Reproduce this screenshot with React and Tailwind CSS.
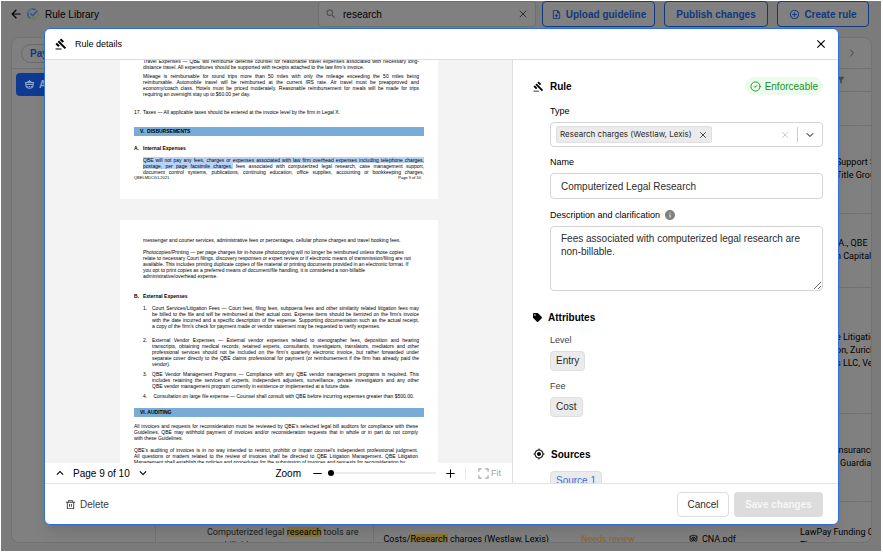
import { useState } from 'react'
import {
  MdAddCircleOutline,
  MdArrowBack,
  MdClose,
  MdFilterAlt,
  MdGavel,
  MdInfo,
  MdKeyboardArrowDown,
  MdKeyboardArrowUp,
  MdMyLocation,
  MdOutlineUploadFile,
  MdSearch,
} from 'react-icons/md'
import { FaTag } from 'react-icons/fa'
import { RiDeleteBinLine } from 'react-icons/ri'
import { LuChevronDown, LuChevronRight, LuCircleCheck, LuMinus, LuPlus, LuX } from 'react-icons/lu'

const clientRows = [
  { height: 'h-[88px]', lines: ['Support S', 'Title Grou'] },
  { height: 'h-[74px]', lines: ['.A., QBE', 'n Capital'] },
  { height: 'h-[126px]', lines: ['e Litigatio', 'on, Zurich', 's LLC, Ver'] },
  { height: 'h-[88px]', lines: ['Insurance', ', Guardia'] },
]

function Logo() {
  return (
    <svg width="12" height="12" viewBox="0 0 24 24" fill="none" strokeWidth="3">
      <path d="M17 3.5A10 10 0 1 0 21.5 10" stroke="#27599b" />
      <path d="M21.5 10a10 10 0 0 1-15 10.5" stroke="#8a8040" />
      <path d="M2.5 9a10 10 0 0 1 7-7" stroke="#5d7f6a" />
      <path d="M7 11l4.5 4.5L21 5" stroke="#27599b" />
    </svg>
  )
}

function BotIcon() {
  return (
    <svg width="11" height="11" viewBox="0 0 24 24" fill="none" stroke="currentColor" strokeWidth="2.4">
      <path d="M12 2v5M8 7c0-3 8-3 8 0M2 8h20M4 8v4h16V8M4 12c0 11 16 11 16 0" />
      <path d="M8 15v3M12 15v3M16 15v3" />
    </svg>
  )
}

function ShieldIcon() {
  return (
    <svg width="9" height="10" viewBox="0 0 24 24" fill="none" stroke="currentColor" strokeWidth="2.4">
      <path d="M3 4c6 0 6-2 9-2s3 2 9 2v9c0 5-4 8-9 10-5-2-9-5-9-10z" />
      <circle cx="12" cy="12" r="5" />
      <path d="M10 12h4M12 10v4" />
    </svg>
  )
}

function FitIcon() {
  return (
    <svg width="11" height="11" viewBox="0 0 24 24" fill="none" stroke="currentColor" strokeWidth="2.4">
      <path d="M2 8V2h6M16 2h6v6M22 16v6h-6M8 22H2v-6" />
    </svg>
  )
}

function Library() {
  return (
    <div className="flex h-full flex-col bg-[#7b7b7b] text-black">
      <header className="flex items-center pr-3 pl-2">
        <button aria-label="Back">
          <MdArrowBack size={14} />
        </button>
        <div className="ml-1 flex items-center gap-1.5">
          <Logo />
          <h1>Rule Library</h1>
        </div>
        <div className="ml-auto flex items-center">
          <label className="flex h-[26px] w-[218px] items-center rounded border border-[#6f6f6f] bg-[#808080] px-1.5">
            <MdSearch size={12} className="text-[#4c4c4c]" />
            <input
              aria-label="Search rules"
              defaultValue="research"
              className="ml-1.5 min-w-0 flex-1 outline-none"
            />
            <LuX size={12} className="text-[#2f2f2f]" />
          </label>
          <div className="ml-1.5 flex gap-[9px] font-bold text-[#12387e]">
            <button className="flex h-[26px] w-[113px] items-center justify-center gap-1 rounded border border-[#12387e] bg-[#808080]">
              <MdOutlineUploadFile size={11} />
              Upload guideline
            </button>
            <button className="h-[26px] w-[104px] rounded border border-[#12387e] bg-[#808080]">
              Publish changes
            </button>
            <button className="flex h-[26px] w-[92px] items-center justify-center gap-1 rounded border border-[#12387e] bg-[#808080]">
              <MdAddCircleOutline size={11} />
              Create rule
            </button>
          </div>
        </div>
      </header>

      <main className="mt-[10px] mr-[9px] mb-[8px] ml-[10px] flex min-h-0 flex-1 flex-col overflow-hidden rounded-lg border border-[#727272] bg-[#808080]">
        <nav className="flex h-[31px] shrink-0 items-center justify-between border-b border-[#727272] px-[9px]">
          <button className="h-[19px] rounded-full border border-[#6b6b6b] px-2 font-bold text-[#12387e]">
            Payments
          </button>
          <LuChevronRight size={12} className="mr-1 text-[#444444]" />
        </nav>
        <div className="flex min-h-0 flex-1">
          <aside className="w-[144px] shrink-0 border-r border-[#727272] p-1">
            <button className="flex h-[23px] w-full items-center gap-1 rounded bg-[#0d3b94] px-2 font-bold text-[#8fa3c8]">
              <BotIcon />
              All
            </button>
          </aside>
          <div className="min-w-0 flex-1 overflow-hidden">
            <table className="w-full table-fixed border-collapse text-left font-['Roboto'] text-[9px] leading-[13px]">
              <colgroup>
                <col className="w-[217px]" />
                <col className="w-[198px]" />
                <col className="w-[109px]" />
                <col className="w-[110px]" />
                <col />
              </colgroup>
              <thead>
                <tr className="h-[22px] border-b border-[#727272]">
                  <th colSpan={4} />
                  <th className="pl-[46px]">
                    <MdFilterAlt size={10} className="text-[#4c4c4c]" />
                  </th>
                </tr>
              </thead>
              <tbody>
                <tr className="h-[34px] border-b border-[#727272]">
                  <td colSpan={5} />
                </tr>
                {clientRows.map((row) => (
                  <tr key={row.lines[0]} className={`${row.height} border-b border-[#727272]`}>
                    <td colSpan={4} />
                    <td className="overflow-hidden pl-[46px] whitespace-nowrap">
                      {row.lines.map((line) => (
                        <div key={line}>{line}</div>
                      ))}
                    </td>
                  </tr>
                ))}
                <tr className="h-[76px] whitespace-nowrap">
                  <td className="border-r border-[#727272] pl-[51px] text-[#1c1c1c]">
                    Computerized legal <mark className="bg-[#8d7536] text-black">research</mark> tools are
                    <br />
                    non-billable.
                  </td>
                  <td className="pl-[10px]">
                    Costs/<mark className="bg-[#8d7536] text-black">Research</mark> charges (Westlaw, Lexis)
                  </td>
                  <td className="pl-[10px] text-[#91661a]">Needs review</td>
                  <td className="pl-[9px]">
                    <span className="flex items-center gap-1">
                      <ShieldIcon />
                      CNA.pdf
                    </span>
                  </td>
                  <td className="overflow-hidden pl-[10px]">
                    LawPay Funding C
                    <br />
                    Thomson
                  </td>
                </tr>
              </tbody>
            </table>
          </div>
        </div>
      </main>
    </div>
  )
}

// one printed line of the document, spread to the column edge when justified
function Lines({ text, justify = false }) {
  return text.map((line, i) => (
    <p
      key={line}
      className={
        justify && i < text.length - 1
          ? 'whitespace-nowrap text-justify [text-align-last:justify]'
          : 'whitespace-nowrap'
      }
    >
      {line}
    </p>
  ))
}

function Item({ mark, children }) {
  return (
    <div className="flex">
      <span className="w-[9px] shrink-0">{mark}</span>
      <div className="min-w-0 flex-1">{children}</div>
    </div>
  )
}

function Band({ children }) {
  return <h3 className="h-[9px] bg-[#78abd6] pl-1.5 leading-[9px] font-bold">{children}</h3>
}

function DocumentPages() {
  return (
    <div className="-mt-8 flex flex-col gap-[21px] pl-[75px] text-[5px] leading-[6px] text-black">
      <article className="h-[171px] w-[318px] bg-white px-[14px] pt-[30px]">
        <div className="flex flex-col pr-[5px] pl-[9px]">
          <Lines
            justify
            text={[
              'Travel Expenses — QBE will reimburse defense counsel for reasonable travel expenses associated with necessary long-',
              'distance travel. All expenditures should be supported with receipts attached to the law firm’s invoice.',
            ]}
          />
          <div className="mt-[3px]">
            <Lines
              justify
              text={[
                'Mileage is reimbursable for round trips more than 50 miles with only the mileage exceeding the 50 miles being',
                'reimbursable. Automobile travel will be reimbursed at the current IRS rate. Air travel must be preapproved and',
                'economy/coach class. Hotels must be priced moderately. Reasonable reimbursement for meals will be made for trips',
                'requiring an overnight stay up to $60.00 per day.',
              ]}
            />
          </div>
        </div>
        <div className="mt-[12px]">
          <Item mark="17.">
            <p>Taxes — All applicable taxes should be entered at the invoice level by the firm in Legal X.</p>
          </Item>
        </div>
        <div className="mt-[12px]">
          <Band>V. &nbsp;DISBURSEMENTS</Band>
        </div>
        <div className="mt-[9px] font-bold">
          <Item mark="A.">Internal Expenses</Item>
        </div>
        <div className="mt-[6px] pl-[9px]">
          <p className="text-justify whitespace-nowrap [text-align-last:justify]">
            <mark className="bg-[#b9d3f8] text-inherit">
              QBE will not pay any fees, charges or expenses associated with law firm overhead expenses including telephone charges,
            </mark>
          </p>
          <p className="text-justify whitespace-nowrap [text-align-last:justify]">
            <mark className="bg-[#b9d3f8] text-inherit">postage, per page facsimile charges,</mark> fees associated with
            computerized legal research, case management support,
          </p>
          <p className="text-justify whitespace-nowrap [text-align-last:justify]">
            document control systems, publications, continuing education, office supplies, accounting or bookkeeping charges,
          </p>
        </div>
        <div className="flex justify-between pr-[3px] text-[4px]">
          <span>QBELMDCG1.2021</span>
          <span>Page 9 of 10</span>
        </div>
      </article>

      <article className="w-[318px] bg-white px-[14px] pt-[17px]">
        <div className="pl-[9px]">
          <p className="whitespace-nowrap">
            messenger and courier services, administrative fees or percentages, cellular phone charges and travel booking fees.
          </p>
          <div className="mt-[6px]">
            <Lines
              text={[
                'Photocopies/Printing — per page charges for in-house photocopying will no longer be reimbursed unless those copies',
                'relate to necessary Court filings, discovery responses or expert review or if electronic means of transmission/filing are not',
                'available. This includes printing duplicate copies of file material or printing documents provided in an electronic format. If',
                'you opt to print copies as a preferred means of document/file handling, it is considered a non-billable',
                'administrative/overhead expense.',
              ]}
            />
          </div>
        </div>
        <div className="mt-[14px] font-bold">
          <Item mark="B.">External Expenses</Item>
        </div>
        <div className="mt-[6px] flex flex-col gap-[4px] pr-[5px] pl-[9px]">
          <div className="pb-[4px]">
            <Item mark="1.">
              <Lines
                justify
                text={[
                  'Court Services/Litigation Fees — Court fees, filing fees, subpoena fees and other similarity related litigation fees may',
                  'be billed to the file and will be reimbursed at their actual cost. Expense items should be itemized on the firm’s invoice',
                  'with the date incurred and a specific description of the expense. Supporting documentation such as the actual receipt,',
                  'a copy of the firm’s check for payment made or vendor statement may be requested to verify expenses.',
                ]}
              />
            </Item>
          </div>
          <Item mark="2.">
            <Lines
              justify
              text={[
                'External Vendor Expenses — External vendor expenses related to stenographer fees, deposition and hearing',
                'transcripts, obtaining medical records, retained experts, consultants, investigators, translators, mediators and other',
                'professional services should not be included on the firm’s quarterly electronic invoice, but rather forwarded under',
                'separate cover directly to the QBE claims professional for payment (or reimbursement if the firm has already paid the',
                'vendor).',
              ]}
            />
          </Item>
          <Item mark="3.">
            <Lines
              justify
              text={[
                'QBE Vendor Management Programs — Compliance with any QBE vendor management programs is required. This',
                'includes retaining the services of experts, independent adjusters, surveillance, private investigators and any other',
                'QBE vendor management program currently in existence or implemented at a future date.',
              ]}
            />
          </Item>
          <Item mark="4.">
            <p className="whitespace-nowrap">
              &nbsp;Consultation on large file expense — Counsel shall consult with QBE before incurring expenses greater than $500.00.
            </p>
          </Item>
        </div>
        <div className="mt-[9px]">
          <Band>VI. AUDITING</Band>
        </div>
        <div className="mt-[6px] flex flex-col gap-[6px] pr-[6px]">
          <div>
            <Lines
              justify
              text={[
                'All invoices and requests for reconsideration must be reviewed by QBE’s selected legal bill auditors for compliance with these',
                'Guidelines. QBE may withhold payment of invoices and/or reconsideration requests that in whole or in part do not comply',
                'with these Guidelines.',
              ]}
            />
          </div>
          <div>
            <Lines
              justify
              text={[
                'QBE’s auditing of invoices is in no way intended to restrict, prohibit or impair counsel’s independent professional judgment.',
                'All questions or matters related to the review of invoices shall be directed to QBE Litigation Management. QBE Litigation',
                'Management shall establish the policies and procedures for the submission of invoices and requests for reconsideration by',
              ]}
            />
          </div>
        </div>
      </article>
    </div>
  )
}

function Viewer() {
  const [page, setPage] = useState(9)

  return (
    <section className="flex w-[468px] shrink-0 flex-col border-r border-[#dedede]">
      <div className="min-h-0 flex-1 overflow-hidden bg-[#f3f3f3]">
        <DocumentPages />
      </div>
      <div className="flex h-5 shrink-0 items-center pr-[11px] pl-2">
        <button aria-label="Previous page" onClick={() => setPage(Math.max(1, page - 1))}>
          <MdKeyboardArrowUp size={14} />
        </button>
        <span className="mx-1.5">Page {page} of 10</span>
        <button aria-label="Next page" onClick={() => setPage(Math.min(10, page + 1))}>
          <MdKeyboardArrowDown size={14} />
        </button>
        <label htmlFor="zoom" className="ml-auto">
          Zoom
        </label>
        <button aria-label="Zoom out" className="ml-2.5">
          <LuMinus size={13} />
        </button>
        <input
          id="zoom"
          type="range"
          defaultValue={0}
          className="mx-1 h-[7px] w-[108px] appearance-none bg-transparent [&::-webkit-slider-runnable-track]:h-[2px] [&::-webkit-slider-runnable-track]:bg-[#ececec] [&::-webkit-slider-thumb]:-mt-[2px] [&::-webkit-slider-thumb]:size-[6px] [&::-webkit-slider-thumb]:appearance-none [&::-webkit-slider-thumb]:rounded-full [&::-webkit-slider-thumb]:bg-black"
        />
        <button aria-label="Zoom in" className="ml-1">
          <LuPlus size={13} />
        </button>
        <button className="ml-2 flex items-center gap-0.5 border-l border-[#e8e8e8] pl-3 text-[9px] leading-3 text-[#a3a3a3]">
          <FitIcon />
          Fit
        </button>
      </div>
    </section>
  )
}

function SectionTitle({ icon, children }) {
  return (
    <h3 className="flex items-center gap-1.5 font-bold">
      {icon}
      {children}
    </h3>
  )
}

function RuleForm() {
  return (
    <section className="min-w-0 flex-1 overflow-hidden pt-[17px] pr-[15px] pl-5">
      <div className="flex h-[18px] items-center justify-between">
        <SectionTitle icon={<MdGavel size={11} />}>Rule</SectionTitle>
        <span className="flex h-[18px] items-center gap-1 rounded-full bg-[#ecfbec] px-[5px] text-[#17931a]">
          <LuCircleCheck size={11} />
          Enforceable
        </span>
      </div>
      <div className="mt-[10px] pl-[17px]">
        <label htmlFor="type" className="block text-[9px] leading-3">
          Type
        </label>
        <div className="mt-[5px] flex h-[25px] items-center rounded border border-[#d4d4d4] pr-1.5 pl-[5px]">
          <span className="flex h-[17px] items-center gap-1.5 rounded-xs border border-[#e0e0e0] bg-[#ebebeb] px-[3px] font-['Inter'] text-[8px] text-[#2b2b2b]">
            Research charges (Westlaw, Lexis)
            <button aria-label="Remove">
              <LuX size={10} />
            </button>
          </span>
          <input id="type" className="min-w-0 flex-1 outline-none" />
          <button aria-label="Clear">
            <LuX size={10} className="text-[#bdbdbd]" />
          </button>
          <span className="mr-1.5 ml-[7px] h-[15px] w-px bg-[#cccccc]" />
          <button aria-label="Open">
            <LuChevronDown size={12} />
          </button>
        </div>
        <label htmlFor="name" className="mt-[9px] block text-[9px] leading-3">
          Name
        </label>
        <input
          id="name"
          defaultValue="Computerized Legal Research"
          className="mt-[5px] block h-[26px] w-full rounded border border-[#d4d4d4] px-[10px] text-[#2b2b2b]"
        />
        <label htmlFor="description" className="mt-[10px] flex h-3 items-center gap-1 text-[9px] leading-3">
          Description and clarification
          <MdInfo size={12} className="text-[#808080]" />
        </label>
        <textarea
          id="description"
          defaultValue="Fees associated with computerized legal research are non-billable."
          className="mt-[5px] block h-[65px] w-full rounded border border-[#d4d4d4] px-[10px] py-[5px] leading-[13px] text-[#2b2b2b]"
        />
      </div>

      <div className="mt-[17px] flex h-[18px] items-center">
        <SectionTitle icon={<FaTag size={9} />}>Attributes</SectionTitle>
      </div>
      <dl className="mt-2 flex flex-col items-start pl-[17px]">
        <dt className="text-[9px] leading-3 text-[#444444]">Level</dt>
        <dd className="mt-[5px] h-5 rounded border border-[#dfdfdf] bg-[#ebebeb] px-[5px] leading-[18px] text-[#2b2b2b]">
          Entry
        </dd>
        <dt className="mt-[9px] text-[9px] leading-3 text-[#444444]">Fee</dt>
        <dd className="mt-[5px] h-5 rounded border border-[#dfdfdf] bg-[#ebebeb] px-[5px] leading-[18px] text-[#2b2b2b]">
          Cost
        </dd>
      </dl>

      <div className="mt-7 flex h-[18px] items-center">
        <SectionTitle icon={<MdMyLocation size={12} />}>Sources</SectionTitle>
      </div>
      <div className="mt-2 flex pl-[17px]">
        <a
          href="#source-1"
          className="h-5 rounded border border-[#dfdfdf] bg-[#ebebeb] px-[5px] leading-[18px] text-[#2f72e0]"
        >
          Source 1
        </a>
      </div>
    </section>
  )
}

export default function App() {
  return (
    <div className="h-screen bg-white pt-px pr-[2px] pb-[2px] pl-px font-['Liberation_Sans',sans-serif] text-[10px] leading-[13px] text-black">
      <div className="relative h-full">
        <Library />

        <div className="absolute inset-0 pt-[27px] pr-[42px] pb-[26px] pl-[43px]">
          <div
            role="dialog"
            aria-label="Rule details"
            className="flex h-full flex-col overflow-hidden rounded-md border border-[#2f6fdc] bg-white shadow-lg"
          >
            <header className="flex h-[31px] shrink-0 items-center border-b border-[#dedede] px-[10px]">
              <MdGavel size={12} />
              <h2 className="ml-2 text-[9px]">Rule details</h2>
              <button aria-label="Close" className="ml-auto">
                <MdClose size={14} />
              </button>
            </header>
            <div className="flex min-h-0 flex-1">
              <Viewer />
              <RuleForm />
            </div>
            <footer className="flex h-[41px] shrink-0 items-center border-t border-[#e3e3e3] pr-[15px] pl-5">
              <button className="flex items-center gap-1 text-[#3b3b3b]">
                <RiDeleteBinLine size={11} />
                Delete
              </button>
              <button className="ml-auto h-[25px] w-[52px] rounded border border-[#dedede] text-[#2b2b2b]">
                Cancel
              </button>
              <button disabled className="ml-[5px] h-[25px] w-[89px] rounded bg-[#dcdcdc] font-bold text-[#f6f6f6]">
                Save changes
              </button>
            </footer>
          </div>
        </div>
      </div>
    </div>
  )
}
